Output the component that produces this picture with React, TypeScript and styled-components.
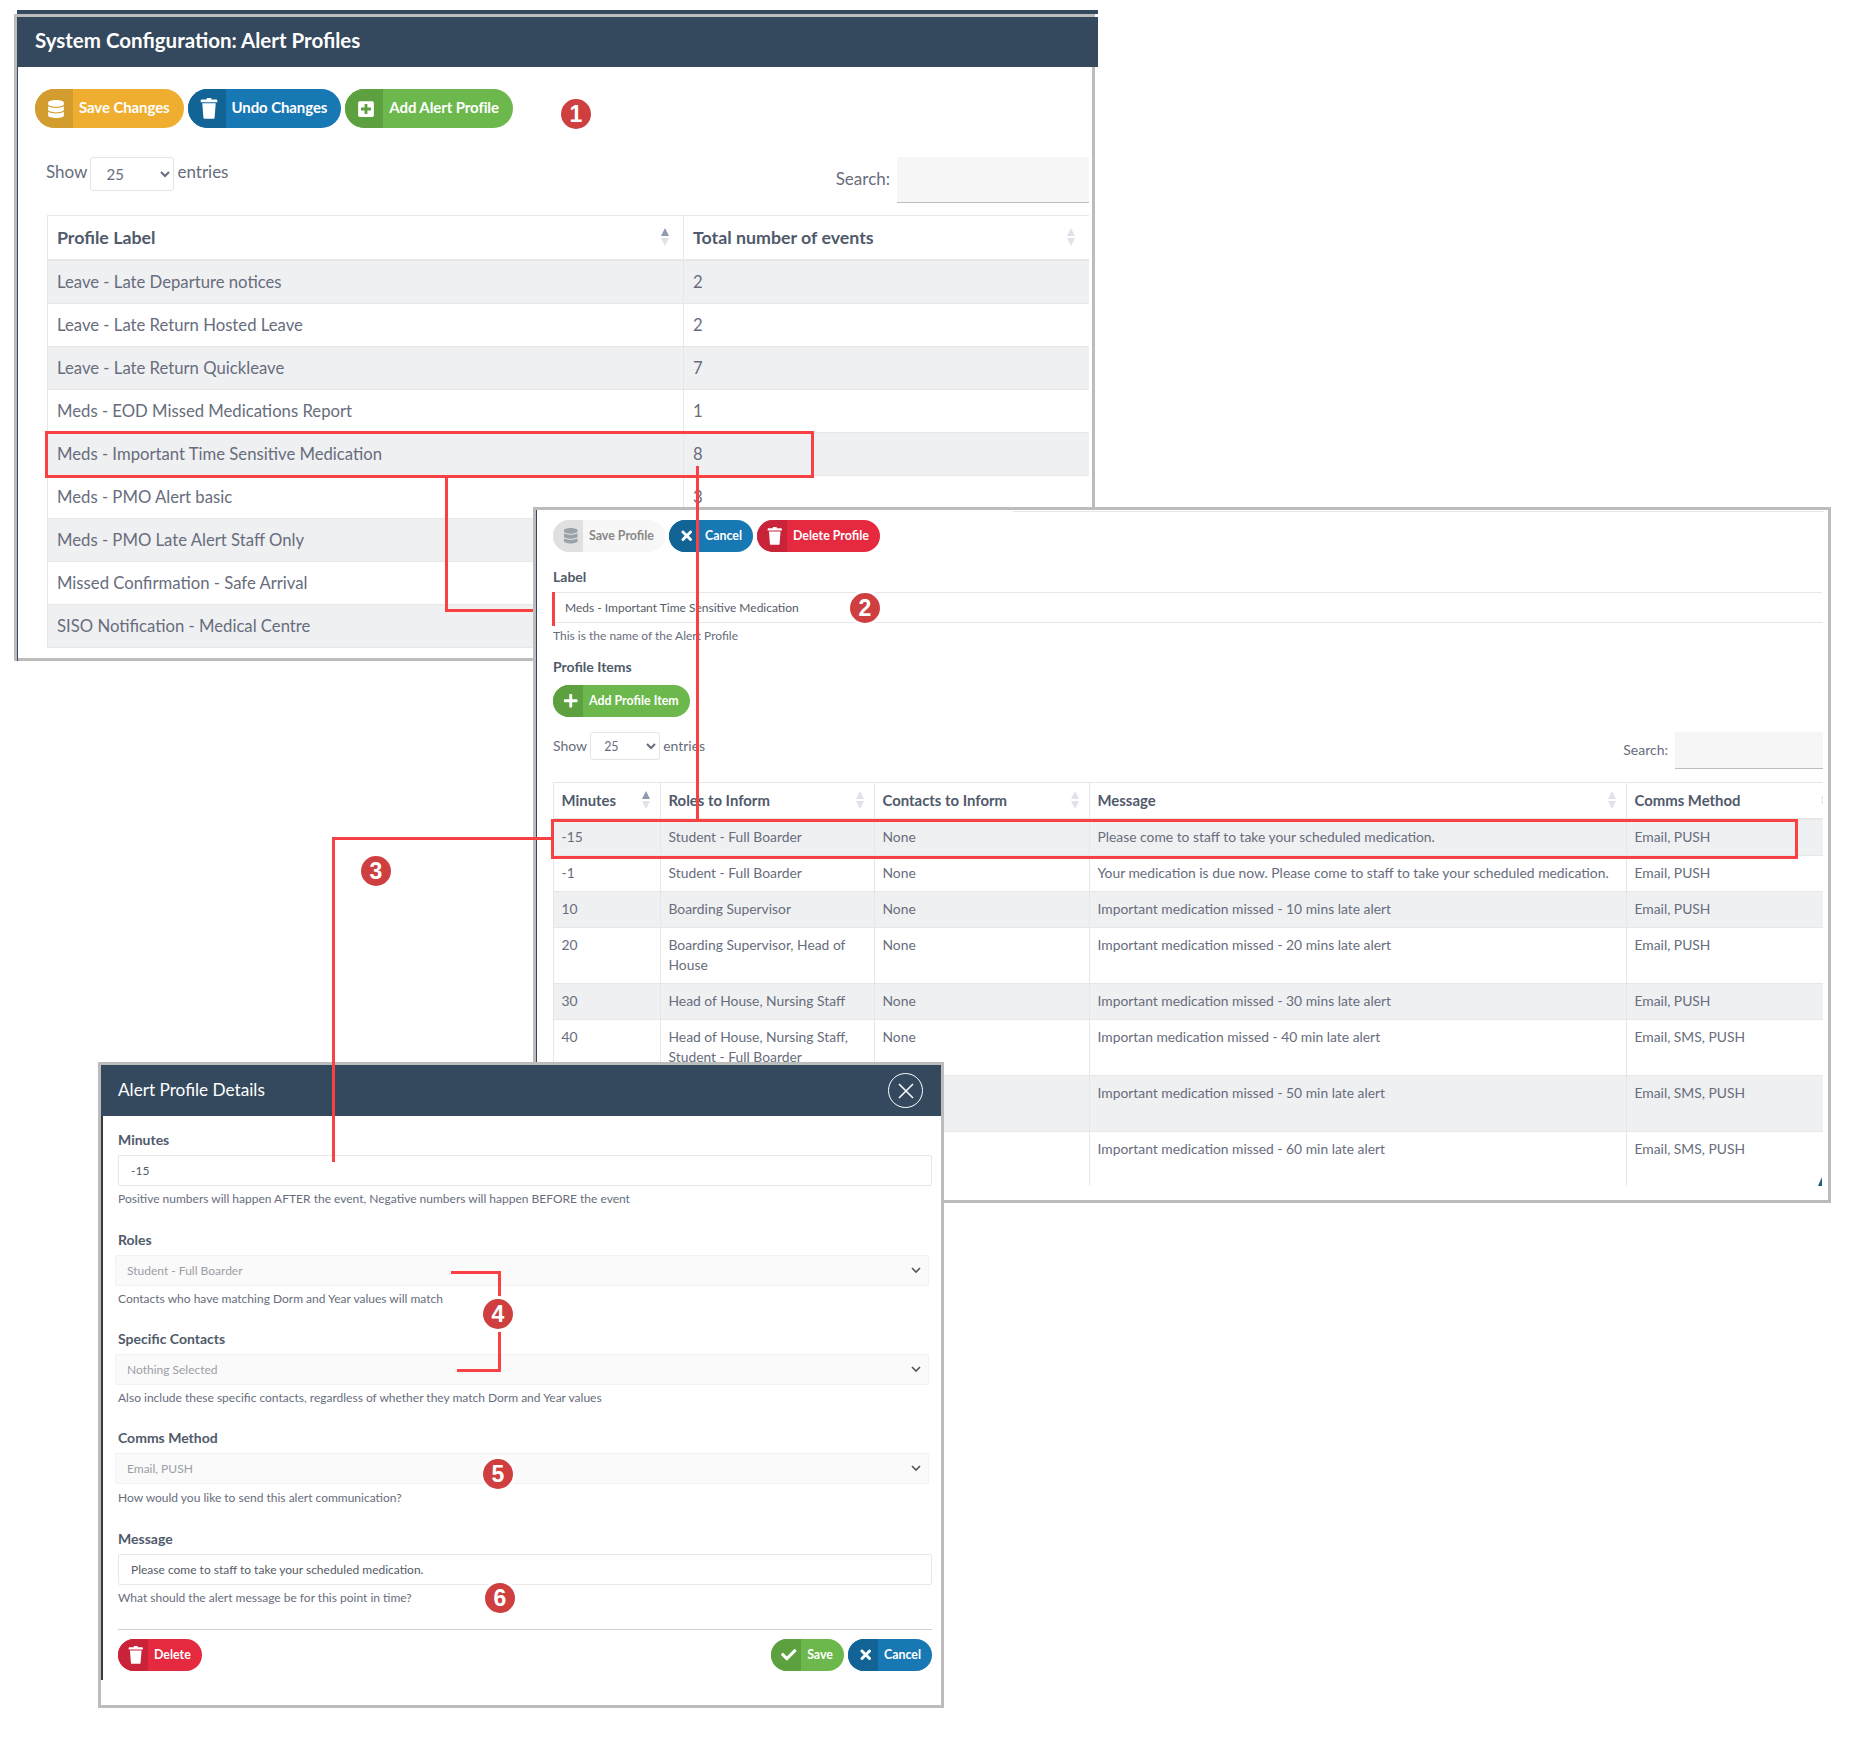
import React from 'react';
import styled, { createGlobalStyle } from 'styled-components';
import { FaDatabase, FaPlusSquare, FaPlus, FaTimes, FaCheck } from 'react-icons/fa';

const colors = {
    navy: '#34495e',
    frame: '#bcbcbc',
    line: '#e7e7e7',
    stripe: '#eff0f2',
    text: '#676d7c',
    heading: '#505a6b',
    red: '#f94144',
    badge: '#cf3f40',
};

const tones = {
    yellow: { body: '#f0ae30', icon: '#d29d2e', text: '#fff' },
    blue: { body: '#1878b4', icon: '#136496', text: '#fff' },
    green: { body: '#6cb84c', icon: '#5ca03f', text: '#fff' },
    red: { body: '#e5293f', icon: '#c9233a', text: '#fff' },
    grey: { body: '#f7f7f7', icon: '#e0e0e0', text: '#888' },
};

type Tone = keyof typeof tones;

const Global = createGlobalStyle`
    html, body { margin: 0; background: #fff; }
    * { box-sizing: border-box; }
    body { font-family: Lato, "Open Sans", sans-serif; color: ${colors.text}; }
`;

const Page = styled.div`
    position: relative;
    width: 1860px;
    height: 1749px;
    background: #fff;
    overflow: hidden;
`;

const Win = styled.section<{ $x: number; $y: number; $w: number; $h: number }>`
    position: absolute;
    left: ${p => p.$x}px;
    top: ${p => p.$y}px;
    width: ${p => p.$w}px;
    height: ${p => p.$h}px;
    border: 3px solid ${colors.frame};
    background: #fff;
`;

const Header = styled.header`
    position: relative;
    height: 50px;
    margin-right: -6px;
    padding: 0 0 4px 18px;
    display: flex;
    align-items: center;
    background: ${colors.navy};
    color: #fff;
    font-size: 20.5px;
    font-weight: 700;
    &::before {
        content: '';
        position: absolute;
        left: 0;
        right: 0;
        top: -7px;
        height: 4px;
        background: ${colors.navy};
    }
`;

const MainBody = styled.div`
    height: 594px;
    border-left: 1px solid ${colors.navy};
    padding: 22px 3px 0 17px;
`;

const ButtonRow = styled.div`
    display: flex;
    gap: 4px;
`;

const Btn = styled.button<{ $tone: Tone; $big?: boolean }>`
    display: inline-flex;
    align-items: stretch;
    height: ${p => (p.$big ? 39 : 32)}px;
    padding: 0 ${p => (p.$big ? 14 : 11)}px 0 0;
    border: 0;
    border-radius: 20px;
    overflow: hidden;
    background: ${p => tones[p.$tone].body};
    color: ${p => tones[p.$tone].text};
    font-family: inherit;
    font-size: ${p => (p.$big ? 15 : 12.4)}px;
    font-weight: 700;
    letter-spacing: ${p => (p.$big ? -0.1 : 0)}px;
`;

const BtnIcon = styled.span<{ $tone: Tone; $big?: boolean }>`
    display: flex;
    align-items: center;
    justify-content: center;
    width: ${p => (p.$big ? 38 : 30)}px;
    margin-right: 6px;
    padding-left: ${p => (p.$big ? 4 : 6)}px;
    background: ${p => tones[p.$tone].icon};
    color: ${p => (p.$tone === 'grey' ? '#9aa1a8' : '#fff')};
    font-size: ${p => (p.$big ? 18 : 15.5)}px;
`;

const BtnLabel = styled.span<{ $big?: boolean }>`
    align-self: center;
    padding-bottom: ${p => (p.$big ? 4 : 2)}px;
    white-space: nowrap;
`;

const Controls = styled.div<{ $big?: boolean }>`
    display: flex;
    justify-content: space-between;
    align-items: flex-start;
    margin-top: ${p => (p.$big ? 29 : 15)}px;
    padding-left: ${p => (p.$big ? 11 : 0)}px;
    font-size: ${p => (p.$big ? 17 : 14)}px;
`;

const LengthGroup = styled.label<{ $big?: boolean }>`
    display: flex;
    align-items: flex-start;
    gap: 3px;
    line-height: ${p => (p.$big ? 30 : 28)}px;
`;

const LengthSelect = styled.select<{ $big?: boolean }>`
    width: ${p => (p.$big ? 84 : 70)}px;
    height: ${p => (p.$big ? 34 : 28)}px;
    padding-left: ${p => (p.$big ? 11 : 9)}px;
    border: 1px solid #e4e4e4;
    border-radius: 3px;
    background: #fff;
    color: ${colors.text};
    font-family: inherit;
    font-size: ${p => (p.$big ? 15 : 12.5)}px;
`;

const SearchGroup = styled.label`
    display: flex;
    align-items: center;
    gap: 7px;
`;

const SearchText = styled.span<{ $big?: boolean }>`
    padding-bottom: ${p => (p.$big ? 4 : 2)}px;
`;

const SearchInput = styled.input<{ $big?: boolean }>`
    width: ${p => (p.$big ? 192 : 148)}px;
    height: ${p => (p.$big ? 46 : 37)}px;
    border: 0;
    border-bottom: 1px solid #bdbdbd;
    background: #f6f6f6;
`;

const TableClip = styled.div<{ $big?: boolean }>`
    margin-top: ${p => (p.$big ? 12 : 13)}px;
    margin-left: ${p => (p.$big ? 12 : 0)}px;
    height: ${p => (p.$big ? 'auto' : '404px')};
    overflow: hidden;
`;

const Table = styled.table<{ $big?: boolean; $w: number }>`
    width: ${p => p.$w}px;
    border-collapse: collapse;
    table-layout: fixed;
    font-size: ${p => (p.$big ? 16.7 : 13.85)}px;
    line-height: ${p => (p.$big ? 22 : 20)}px;
`;

const Col = styled.col<{ $w: number }>`
    width: ${p => p.$w}px;
`;

const Th = styled.th<{ $big?: boolean }>`
    height: ${p => (p.$big ? 44 : 36)}px;
    padding: 0 ${p => (p.$big ? '13px 0 9px' : '9px 0 7.5px')};
    border: 1px solid ${colors.line};
    border-bottom-width: 2px;
    color: ${colors.heading};
    font-size: ${p => (p.$big ? 17.8 : 14.9)}px;
    font-weight: 700;
    text-align: left;
`;

const ThInner = styled.div`
    display: flex;
    justify-content: space-between;
    align-items: center;
`;

const Row = styled.tr`
    &:nth-child(odd) { background: ${colors.stripe}; }
`;

const Td = styled.td<{ $big?: boolean }>`
    padding: ${p => (p.$big ? '10px 9px' : '7.5px')};
    border: 1px solid ${colors.line};
    vertical-align: top;
`;

const Frame2Edge = styled.div`
    position: absolute;
    left: 477px;
    right: 4px;
    top: 1px;
    height: 1px;
    background: ${colors.line};
`;

const Panel = styled.div`
    height: 690px;
    border-left: 1px solid ${colors.navy};
    padding: 10px 5px 0 16px;
    overflow: hidden;
`;

const FieldLabel = styled.div<{ $top: number }>`
    margin-top: ${p => p.$top}px;
    height: 18px;
    color: ${colors.heading};
    font-size: 14px;
    font-weight: 700;
    line-height: 18px;
`;

const TextBox = styled.input`
    display: block;
    width: 100%;
    height: 31px;
    margin-top: 6px;
    padding: 0 12px;
    border: 1px solid ${colors.line};
    border-radius: 2px;
    background: #fff;
    color: #555b66;
    font-family: inherit;
    font-size: 12px;
`;

const LabelBox = styled(TextBox)`
    margin-bottom: 2px;
    border-left: 0;
    border-right: 0;
`;

const Help = styled.div<{ $top?: number }>`
    margin-top: ${p => p.$top ?? 5}px;
    height: 16px;
    font-size: 12px;
    line-height: 16px;
`;

const SpacedButton = styled.div`
    margin-top: 9px;
`;

const CornerMark = styled.div`
    position: absolute;
    right: 6px;
    bottom: 14px;
    width: 0;
    height: 0;
    border-left: 4px solid transparent;
    border-bottom: 9px solid #1c5f86;
`;

const ModalHeader = styled.header`
    display: flex;
    align-items: center;
    justify-content: space-between;
    height: 51px;
    padding: 0 18px 0 17px;
    background: ${colors.navy};
    color: #fff;
    font-size: 17.2px;
`;

const ModalTitle = styled.span`
    padding-bottom: 2px;
`;

const CloseCircle = styled.div`
    display: flex;
    align-items: center;
    justify-content: center;
    width: 35px;
    height: 35px;
    border: 1.5px solid #fff;
    border-radius: 50%;
`;

const ModalBody = styled.div`
    height: 564px;
    border-left: 2px solid #3a3a3a;
    padding: 15px 9px 0 15px;
`;

const FakeSelect = styled.div`
    display: flex;
    align-items: center;
    justify-content: space-between;
    height: 31px;
    margin: 6px 3px 0 -3px;
    padding: 0 7px 0 11px;
    border: 1px solid #f2f2f2;
    border-radius: 2px;
    background: #fafafa;
    color: #9a9ea6;
    font-size: 12px;
`;

const Divider = styled.hr`
    margin: 23px 0 0;
    border: 0;
    border-top: 1px solid #cfcfcf;
`;

const ModalFooter = styled.div`
    display: flex;
    justify-content: space-between;
    margin-top: 9px;
`;

const Wire = styled.div<{ $x: number; $y: number; $w: number; $h: number }>`
    position: absolute;
    left: ${p => p.$x}px;
    top: ${p => p.$y}px;
    width: ${p => p.$w}px;
    height: ${p => p.$h}px;
    background: ${colors.red};
`;

const Callout = styled.div<{ $x: number; $y: number; $w: number; $h: number }>`
    position: absolute;
    left: ${p => p.$x}px;
    top: ${p => p.$y}px;
    width: ${p => p.$w}px;
    height: ${p => p.$h}px;
    border: 3px solid ${colors.red};
`;

const Badge = styled.div<{ $x: number; $y: number }>`
    position: absolute;
    left: ${p => p.$x - 18}px;
    top: ${p => p.$y - 18}px;
    display: flex;
    align-items: center;
    justify-content: center;
    width: 36px;
    height: 36px;
    border: 3px solid #fff;
    border-radius: 50%;
    background: ${colors.badge};
    color: #fff;
    font-family: "Liberation Sans", Arial, sans-serif;
    font-size: 23px;
    font-weight: 700;
`;

const Trash = () => (
    <svg width="1em" height="1.15em" viewBox="0 0 16 20" fill="currentColor">
        <path d="M6 0h4l.5 1.5H15a1 1 0 0 1 1 1V4H0V2.5a1 1 0 0 1 1-1h4.500z" />
        <path d="M1.500 5h13l-1.100 14a1 1 0 0 1-1 1H3.600a1 1 0 0 1-1-1z" />
    </svg>
);

const SortMark = ({ active }: { active?: boolean }) => (
    <svg width="10" height="18" viewBox="0 0 10 18">
        <path d="M5 0l4 8H1z" fill={active ? '#8f9ab0' : '#dfe2e8'} />
        <path d="M5 18l4-8H1z" fill="#dfe2e8" />
    </svg>
);

const Chevron = () => (
    <svg width="10" height="7" viewBox="0 0 10 7" fill="none" stroke="#555" strokeWidth="1.6">
        <path d="M1 1l4 4 4-4" />
    </svg>
);

const Button = ({ tone, big, icon, children }: { tone: Tone; big?: boolean; icon: React.ReactNode; children: React.ReactNode }) => (
    <Btn $tone={tone} $big={big}>
        <BtnIcon $tone={tone} $big={big}>{icon}</BtnIcon>
        <BtnLabel $big={big}>{children}</BtnLabel>
    </Btn>
);

const profiles = [
    ['Leave - Late Departure notices', '2'],
    ['Leave - Late Return Hosted Leave', '2'],
    ['Leave - Late Return Quickleave', '7'],
    ['Meds - EOD Missed Medications Report', '1'],
    ['Meds - Important Time Sensitive Medication', '8'],
    ['Meds - PMO Alert basic', '3'],
    ['Meds - PMO Late Alert Staff Only', '4'],
    ['Missed Confirmation - Safe Arrival', '1'],
    ['SISO Notification - Medical Centre', '1'],
];

const items = [
    ['-15', 'Student - Full Boarder', 'None', 'Please come to staff to take your scheduled medication.', 'Email, PUSH'],
    ['-1', 'Student - Full Boarder', 'None', 'Your medication is due now. Please come to staff to take your scheduled medication.', 'Email, PUSH'],
    ['10', 'Boarding Supervisor', 'None', 'Important medication missed - 10 mins late alert', 'Email, PUSH'],
    ['20', 'Boarding Supervisor, Head of House', 'None', 'Important medication missed - 20 mins late alert', 'Email, PUSH'],
    ['30', 'Head of House, Nursing Staff', 'None', 'Important medication missed - 30 mins late alert', 'Email, PUSH'],
    ['40', 'Head of House, Nursing Staff, Student - Full Boarder', 'None', 'Importan medication missed - 40 min late alert', 'Email, SMS, PUSH'],
    ['50', 'Head of House, Nursing Staff, Student - Full Boarder', 'None', 'Important medication missed - 50 min late alert', 'Email, SMS, PUSH'],
    ['60', 'Head of House, Nursing Staff, Student - Full Boarder', 'None', 'Important medication missed - 60 min late alert', 'Email, SMS, PUSH'],
];

const itemHeads = ['Minutes', 'Roles to Inform', 'Contacts to Inform', 'Message', 'Comms Method'];
const itemCols = [107, 214, 215, 537, 213];

function ProfilesWindow() {
    return (
        <Win $x={14} $y={14} $w={1081} $h={647}>
            <Header>System Configuration: Alert Profiles</Header>
            <MainBody>
                <ButtonRow>
                    <Button big tone="yellow" icon={<FaDatabase />}>Save Changes</Button>
                    <Button big tone="blue" icon={<Trash />}>Undo Changes</Button>
                    <Button big tone="green" icon={<FaPlusSquare />}>Add Alert Profile</Button>
                </ButtonRow>
                <Controls $big>
                    <LengthGroup $big>
                        Show
                        <LengthSelect $big defaultValue="25"><option>25</option></LengthSelect>
                        entries
                    </LengthGroup>
                    <SearchGroup>
                        <SearchText $big>Search:</SearchText>
                        <SearchInput $big />
                    </SearchGroup>
                </Controls>
                <TableClip $big>
                    <Table $big $w={1042}>
                        <colgroup>
                            <Col $w={636} />
                            <Col $w={406} />
                        </colgroup>
                        <thead>
                            <tr>
                                <Th $big><ThInner>Profile Label<SortMark active /></ThInner></Th>
                                <Th $big><ThInner>Total number of events<SortMark /></ThInner></Th>
                            </tr>
                        </thead>
                        <tbody>
                            {profiles.map(row => (
                                <Row key={row[0]}>
                                    <Td $big>{row[0]}</Td>
                                    <Td $big>{row[1]}</Td>
                                </Row>
                            ))}
                        </tbody>
                    </Table>
                </TableClip>
            </MainBody>
        </Win>
    );
}

function ItemsWindow() {
    return (
        <Win $x={533} $y={507} $w={1298} $h={696}>
            <Frame2Edge />
            <Panel>
                <ButtonRow>
                    <Button tone="grey" icon={<FaDatabase />}>Save Profile</Button>
                    <Button tone="blue" icon={<FaTimes />}>Cancel</Button>
                    <Button tone="red" icon={<Trash />}>Delete Profile</Button>
                </ButtonRow>
                <FieldLabel $top={16}>Label</FieldLabel>
                <LabelBox readOnly value="Meds - Important Time Sensitive Medication" />
                <Help>This is the name of the Alert Profile</Help>
                <FieldLabel $top={14}>Profile Items</FieldLabel>
                <SpacedButton>
                    <Button tone="green" icon={<FaPlus />}>Add Profile Item</Button>
                </SpacedButton>
                <Controls>
                    <LengthGroup>
                        Show
                        <LengthSelect defaultValue="25"><option>25</option></LengthSelect>
                        entries
                    </LengthGroup>
                    <SearchGroup>
                        <SearchText>Search:</SearchText>
                        <SearchInput />
                    </SearchGroup>
                </Controls>
                <TableClip>
                    <Table $w={1286}>
                        <colgroup>
                            {itemCols.map((w, i) => <Col key={i} $w={w} />)}
                        </colgroup>
                        <thead>
                            <tr>
                                {itemHeads.map((h, i) => (
                                    <Th key={h}><ThInner>{h}<SortMark active={i === 0} /></ThInner></Th>
                                ))}
                            </tr>
                        </thead>
                        <tbody>
                            {items.map(row => (
                                <Row key={row[0]}>
                                    {row.map((cell, i) => <Td key={i}>{cell}</Td>)}
                                </Row>
                            ))}
                        </tbody>
                    </Table>
                </TableClip>
            </Panel>
            <CornerMark />
        </Win>
    );
}

function DetailsModal() {
    return (
        <Win $x={98} $y={1062} $w={846} $h={646}>
            <ModalHeader>
                <ModalTitle>Alert Profile Details</ModalTitle>
                <CloseCircle>
                    <svg width="18" height="18" viewBox="0 0 18 18" stroke="#fff" strokeWidth="1.5" fill="none">
                        <path d="M2 2l14 14M16 2L2 16" />
                    </svg>
                </CloseCircle>
            </ModalHeader>
            <ModalBody>
                <FieldLabel $top={0}>Minutes</FieldLabel>
                <TextBox readOnly value="-15" />
                <Help>Positive numbers will happen AFTER the event, Negative numbers will happen BEFORE the event</Help>
                <FieldLabel $top={24}>Roles</FieldLabel>
                <FakeSelect>Student - Full Boarder<Chevron /></FakeSelect>
                <Help>Contacts who have matching Dorm and Year values will match</Help>
                <FieldLabel $top={23}>Specific Contacts</FieldLabel>
                <FakeSelect>Nothing Selected<Chevron /></FakeSelect>
                <Help>Also include these specific contacts, regardless of whether they match Dorm and Year values</Help>
                <FieldLabel $top={23}>Comms Method</FieldLabel>
                <FakeSelect>Email, PUSH<Chevron /></FakeSelect>
                <Help $top={6}>How would you like to send this alert communication?</Help>
                <FieldLabel $top={24}>Message</FieldLabel>
                <TextBox readOnly value="Please come to staff to take your scheduled medication." />
                <Help>What should the alert message be for this point in time?</Help>
                <Divider />
                <ModalFooter>
                    <Button tone="red" icon={<Trash />}>Delete</Button>
                    <ButtonRow>
                        <Button tone="green" icon={<FaCheck />}>Save</Button>
                        <Button tone="blue" icon={<FaTimes />}>Cancel</Button>
                    </ButtonRow>
                </ModalFooter>
            </ModalBody>
        </Win>
    );
}

export default function App() {
    return (
        <Page>
            <Global />
            <ProfilesWindow />
            <Callout $x={45} $y={431} $w={769} $h={47} />
            <Wire $x={445} $y={477} $w={3} $h={135} />
            <Wire $x={445} $y={609} $w={108} $h={3} />
            <ItemsWindow />
            <Wire $x={552} $y={592} $w={3} $h={34} />
            <Wire $x={696} $y={466} $w={3} $h={354} />
            <Callout $x={551} $y={819} $w={1247} $h={40} />
            <DetailsModal />
            <Wire $x={332} $y={837} $w={220} $h={3} />
            <Wire $x={332} $y={837} $w={3} $h={325} />
            <Wire $x={451} $y={1271} $w={50} $h={3} />
            <Wire $x={498} $y={1271} $w={3} $h={100} />
            <Wire $x={457} $y={1369} $w={44} $h={3} />
            <Badge $x={576} $y={114}>1</Badge>
            <Badge $x={865} $y={608}>2</Badge>
            <Badge $x={376} $y={871}>3</Badge>
            <Badge $x={498} $y={1314}>4</Badge>
            <Badge $x={498} $y={1474}>5</Badge>
            <Badge $x={500} $y={1598}>6</Badge>
        </Page>
    );
}
